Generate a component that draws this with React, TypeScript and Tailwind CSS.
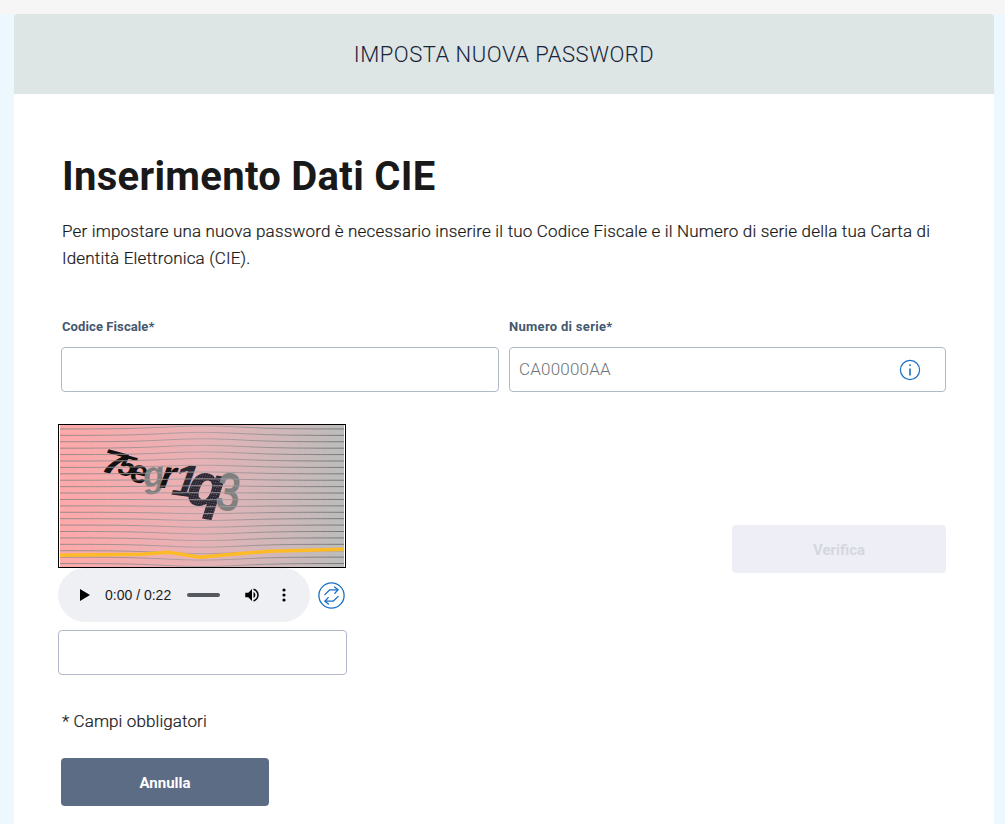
import React from "react";

function captchaLines() {
  const out: string[] = [];
  for (let i = 0; i < 22; i++) {
    const y0 = 4 + i * 6.5;
    let d = "";
    for (let x = 0; x <= 288; x += 6) {
      const dx = (x - 145) / 55;
      const dy = (y0 - 72) / 60;
      const r = Math.exp(-(dx * dx));
      const sign = Math.max(-1, Math.min(1, dy));
      const off = r * (sign * 6 * (1 - Math.abs(sign) * 0.5));
      d += (x === 0 ? "M" : "L") + x + " " + (y0 + off).toFixed(1) + " ";
    }
    out.push(d);
  }
  return out;
}

function Captcha() {
  const lines = captchaLines();
  return (
    <svg width="288" height="144" viewBox="0 0 288 144" className="block border border-black box-border">
      <defs>
        <linearGradient id="cg" x1="0" y1="0" x2="1" y2="0">
          <stop offset="0" stopColor="#ffa8a9" />
          <stop offset="0.5" stopColor="#e6b2b6" />
          <stop offset="1" stopColor="#bcbcbc" />
        </linearGradient>
        <linearGradient id="lg" gradientUnits="userSpaceOnUse" x1="0" y1="0" x2="288" y2="0">
          <stop offset="0" stopColor="#8c8584" />
          <stop offset="0.25" stopColor="#9a8f90" />
          <stop offset="0.5" stopColor="#ad9fa2" />
          <stop offset="0.75" stopColor="#8f8a8a" />
          <stop offset="1" stopColor="#6e6e6e" />
        </linearGradient>
        <pattern id="dots" width="2.4" height="2.4" patternUnits="userSpaceOnUse">
          <rect width="2.4" height="2.4" fill="#2b2833" />
          <circle cx="1.2" cy="1.2" r="0.5" fill="#77737f" />
        </pattern>
      </defs>
      <rect width="288" height="144" fill="url(#cg)" />
      <g fontFamily="Liberation Sans, sans-serif" fontWeight="700">
        <text transform="translate(38 46) rotate(15) skewX(-8) scale(1.35 1)" fontSize="34" fill="#111">7</text>
        <text transform="translate(56 49) rotate(15) skewX(-10)" fontSize="30" fill="#111">5</text>
        <text transform="translate(69 56) rotate(14)" fontSize="33" fill="#111">e</text>
        <text transform="translate(84 64) rotate(-8) skewX(-10)" fontSize="36" fill="#808080">g</text>
        <text transform="translate(98 63) rotate(5) skewX(-15)" fontSize="40" fill="#111">r</text>
        <text transform="translate(110 70) rotate(8) skewX(-12)" fontSize="46" fill="#2a2832">1</text>
        <text transform="translate(125 78) rotate(10) skewX(-8)" fontSize="60" fill="url(#dots)" stroke="url(#dots)" strokeWidth="1.5">q</text>
        <text transform="translate(157 84) rotate(8) scale(0.8 1)" fontSize="52" fontWeight="400" stroke="#808080" strokeWidth="2" fill="#808080">3</text>
      </g>
      <g fill="none" stroke="url(#lg)" strokeWidth="0.9">
        {lines.map((d, i) => (
          <path key={i} d={d} />
        ))}
      </g>
      <path d="M0 132 L82 131 L110 129 L142 134 L175 131 L212 128 L288 126" fill="none" stroke="#fdbb27" strokeWidth="3.5" />
    </svg>
  );
}

function AudioBar() {
  return (
    <div className="w-[252px] h-[54px] rounded-[27px] bg-[#eff0f4] flex items-center text-[#1c1c1c]" >
      <svg width="12" height="14" viewBox="0 0 12 14" className="ml-[21px]">
        <path d="M1 1 L11 7 L1 13 Z" fill="#000" />
      </svg>
      <span className="ml-[14px] text-[14px] font-['Liberation_Sans','Roboto',sans-serif]">0:00 / 0:22</span>
      <div className="ml-[16px] w-[33px] h-[4px] rounded-full bg-[#55595d]" />
      <svg width="18" height="18" viewBox="0 0 24 24" className="ml-[23px]">
        <path d="M3 9v6h4l5 5V4L7 9H3z" fill="#000" />
        <path d="M14 7.97v8.05c1.48-.73 2.5-2.25 2.5-4.02 0-1.77-1.02-3.29-2.5-4.03z" fill="#000" />
        <path d="M14 3.23v2.06c2.89.86 5 3.54 5 6.71s-2.11 5.85-5 6.71v2.06c4.01-.91 7-4.49 7-8.77s-2.99-7.86-7-8.77z" fill="#000" />
      </svg>
      <svg width="4" height="14" viewBox="0 0 4 14" className="ml-[21px]">
        <circle cx="2" cy="2" r="1.6" fill="#000" />
        <circle cx="2" cy="7" r="1.6" fill="#000" />
        <circle cx="2" cy="12" r="1.6" fill="#000" />
      </svg>
    </div>
  );
}

function RefreshIcon() {
  return (
    <svg width="27" height="27" viewBox="0 0 27 27" fill="none" stroke="#1a6fc4" strokeWidth="1.3" strokeLinecap="round" strokeLinejoin="round">
      <circle cx="13.5" cy="13.5" r="12.6" />
      <path d="M6.8 12.6 L11.8 7.8 L20 7.8" />
      <path d="M16.6 5 L20 7.8 L16.8 11.4" />
      <path d="M20.2 14.4 L15.2 19.2 L7 19.2" />
      <path d="M10.4 22 L7 19.2 L10.2 15.6" />
    </svg>
  );
}

export default function App() {
  return (
    <div className="min-h-[824px] h-[824px] overflow-hidden bg-[#edf7fe] text-[#19191a] font-['Roboto',sans-serif]">
      <div className="h-[14px] bg-[#f6f6f6]" />
      <div className="ml-[14px] w-[980px] bg-white rounded-t-[4px] h-[810px]">
        <div className="h-[80px] bg-[#dde5e5] rounded-t-[4px] flex items-center justify-center text-[22px] font-light tracking-[0.5px] text-[#17243a]">
          IMPOSTA NUOVA PASSWORD
        </div>
        <div className="pl-[47px] pr-[48px]">
          <h1 className="mt-[56px] pl-[1px] text-[40px] leading-[54px] font-bold tracking-[0.3px] text-[#19191a]">Inserimento Dati CIE</h1>
          <p className="mt-[14px] pl-[1px] text-[17px] leading-[27px] font-light tracking-[0.17px] text-[#19191a] [-webkit-text-stroke:0.2px_#19191a]">
            Per impostare una nuova password è necessario inserire il tuo Codice Fiscale e il Numero di serie della tua Carta di Identità Elettronica (CIE).
          </p>
          <div className="mt-[44px] grid grid-cols-[438px_437px] gap-x-[10px]">
            <div>
              <label className="block pt-[1px] pl-[1px] text-[13px] leading-[20px] font-bold tracking-[0.1px] text-[#44586f] mb-[10px]">Codice Fiscale*</label>
              <input className="w-full h-[45px] rounded-[4px] border border-[#b1b9c9] bg-white" />
            </div>
            <div>
              <label className="block pt-[1px] text-[13px] leading-[20px] font-bold tracking-[0.3px] text-[#44586f] mb-[10px]">Numero di serie*</label>
              <div className="h-[45px] rounded-[4px] border border-[#b1b9c9] flex items-center px-[9px] justify-between">
                <span className="pt-[1px] text-[17px] font-light tracking-[0.2px] text-[#6d7278]">CA00000AA</span>
                <svg width="22" height="22" viewBox="0 0 22 22" fill="none" stroke="#1a6fc4" strokeWidth="1.2" className="mr-[15px]">
                  <circle cx="11" cy="11" r="9.6" />
                  <path d="M11 9.5 V16.5" strokeWidth="1.6" />
                  <circle cx="11" cy="6.2" r="0.9" fill="#1a6fc4" stroke="none" />
                </svg>
              </div>
            </div>
          </div>
          <div className="mt-[32px] -ml-[3px] flex justify-between">
            <div className="w-[289px]">
              <Captcha />
              <div className="flex items-center">
                <AudioBar />
                <div className="ml-[8px]"><RefreshIcon /></div>
              </div>
              <input className="mt-[8px] block w-[289px] h-[45px] rounded-[4px] border border-[#b1b9c9] bg-white" />
            </div>
            <button className="mt-[101px] w-[214px] h-[48px] rounded-[4px] bg-[#eeeff6] text-[#d5d7e0] font-bold text-[15px] pt-[2px]">Verifica</button>
          </div>
          <p className="mt-[34px] pl-[1px] text-[17px] leading-[24px] font-light text-[#19191a] tracking-[0.1px] [-webkit-text-stroke:0.2px_#19191a]">* Campi obbligatori</p>
          <button className="mt-[25px] w-[208px] h-[48px] rounded-[4px] bg-[#5b6c84] text-white font-bold text-[15px] pt-[2px]">Annulla</button>
        </div>
      </div>
    </div>
  );
}
